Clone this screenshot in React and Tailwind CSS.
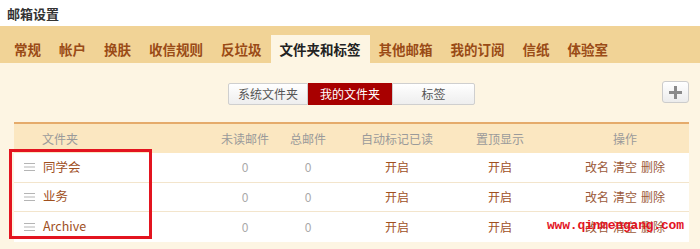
import React from "react";

const tabs = ["常规", "帐户", "换肤", "收信规则", "反垃圾", "文件夹和标签", "其他邮箱", "我的订阅", "信纸", "体验室"];
const rows = ["同学会", "业务", "Archive"];

function Handle() {
  return (
    <svg width="11" height="8" viewBox="0 0 11 8" className="shrink-0">
      <rect x="0" y="0" width="11" height="1" fill="#b5b5b5" />
      <rect x="0" y="3.5" width="11" height="1" fill="#b5b5b5" />
      <rect x="0" y="7" width="11" height="1" fill="#b5b5b5" />
    </svg>
  );
}

export default function App() {
  const cols = "grid grid-cols-[201px_60px_66px_112px_94px_1fr]";
  return (
    <div
      className="relative w-[700px] h-[249px] overflow-hidden bg-[#fdf5e3]"
      style={{ fontFamily: '"Noto Sans CJK SC", "Noto Sans", sans-serif' }}
    >
      <div className="h-[26px] bg-white flex items-center pl-[7px] pt-[1px]">
        <span className="text-[13px] font-bold text-[#333] leading-none">邮箱设置</span>
      </div>
      <div className="h-[37px] bg-[#f1d396] flex items-end pl-[5px]">
        {tabs.map((t) => (
          <div
            key={t}
            className={
              t === "文件夹和标签"
                ? "h-[28px] px-[9px] flex items-center bg-[#fdf5e3] text-[13.5px] font-bold text-[#222]"
                : "h-[28px] px-[9px] flex items-center text-[13.5px] font-bold text-[#9a4b16]"
            }
          >
            {t}
          </div>
        ))}
      </div>
      <div className="relative h-[59px]">
        <div className="absolute left-[228px] top-[20px] flex h-[22px] text-[12px]">
          <div className="w-[80px] flex items-center justify-center border border-[#cfcfcf] rounded-l-[2px] bg-gradient-to-b from-white to-[#eeeeee] text-[#555]">
            系统文件夹
          </div>
          <div className="w-[84px] flex items-center justify-center bg-[#a80000] text-white">我的文件夹</div>
          <div className="w-[83px] flex items-center justify-center border border-[#cfcfcf] rounded-r-[2px] bg-gradient-to-b from-white to-[#eeeeee] text-[#555]">
            标签
          </div>
        </div>
        <div className="absolute left-[662px] top-[18px] w-[27px] h-[22px] border border-[#cccccc] rounded-[3px] bg-gradient-to-b from-white to-[#ececec] flex items-center justify-center">
          <svg width="13" height="13" viewBox="0 0 13 13">
            <rect x="5" y="0" width="3" height="13" fill="#8a8a8a" />
            <rect x="0" y="5" width="13" height="3" fill="#8a8a8a" />
          </svg>
        </div>
      </div>
      <div className="ml-[14px] w-[675px] border-t-2 border-[#e5ab6b]">
        <div className={`${cols} h-[29px] bg-[#fbe7c1] items-center text-[12px] text-[#9a9a9a]`}>
          <div className="pl-[28px]">文件夹</div>
          <div className="text-center">未读邮件</div>
          <div className="text-center">总邮件</div>
          <div className="text-center">自动标记已读</div>
          <div className="text-center">置顶显示</div>
          <div className="text-center pl-[14px]">操作</div>
        </div>
        {rows.map((r, i) => (
          <div
            key={r}
            className={`${cols} h-[29.5px] bg-white items-center text-[12px] ${i < 2 ? "border-b border-[#f3e5cc]" : ""}`}
          >
            <div className="pl-[10px] flex items-center gap-[8px] text-[#a0501e] text-[12.5px]">
              <Handle />
              <span>{r}</span>
            </div>
            <div className="text-center text-[#aaaaaa]">0</div>
            <div className="text-center text-[#aaaaaa]">0</div>
            <div className="text-center text-[#a0501e]">开启</div>
            <div className="text-center text-[#a0501e]">开启</div>
            <div className="text-center pl-[14px] text-[#9b5a3a] flex justify-center gap-[4px]">
              <span>改名</span>
              <span>清空</span>
              <span>删除</span>
            </div>
          </div>
        ))}
      </div>
      <div className="absolute left-[9px] top-[149px] w-[143px] h-[90px] border-[3px] border-[#e3141f]" />
      <div
        className="absolute left-[547px] top-[219px] text-[13px] font-bold text-[#e3141f] leading-none tracking-[-0.2px]"
        style={{ fontFamily: '"Liberation Mono", monospace' }}
      >
        www.qinmengang.com
      </div>
    </div>
  );
}
